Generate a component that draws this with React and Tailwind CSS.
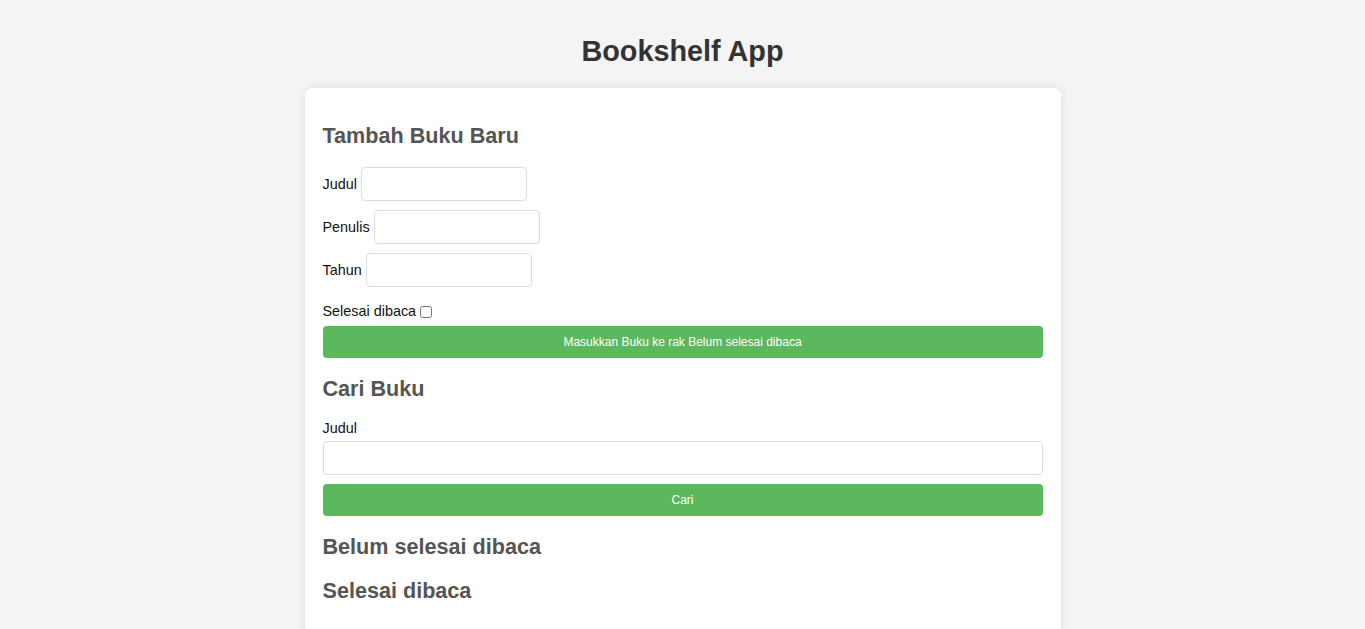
import React from 'react';

const labelCls = 'text-[14.4px] leading-[17px] text-[#111]';
const inputCls = 'w-[166px] h-[34px] border border-[#ddd] rounded-[4px] bg-white px-2 text-[14.4px] outline-none';
const btnCls = 'w-full h-[32px] rounded-[4px] bg-[#5cb85c] text-white text-[12px] leading-[32px] text-center';
const h2Cls = 'text-[21.6px] leading-[25px] font-bold text-[#555]';

const App = () => {
    return (
        <div className="min-h-screen bg-[#f4f4f4] font-['Liberation_Sans',Arial,sans-serif] overflow-hidden">
            <h1 className="pt-[35px] text-center text-[28.8px] leading-[33px] font-bold text-[#333]">Bookshelf App</h1>

            <div className="w-[756px] mx-auto mt-[20px] bg-white rounded-lg shadow-[0_0_10px_rgba(0,0,0,0.1)] px-[18px] pt-[35px] pb-[18px]">
                {/* Form tambah buku */}
                <section>
                    <h2 className={h2Cls}>Tambah Buku Baru</h2>
                    <div className="mt-[19px] flex flex-col gap-[9px]">
                        <div className="flex items-center gap-[4px]">
                            <label className={labelCls}>Judul</label>
                            <input type="text" className={inputCls} />
                        </div>
                        <div className="flex items-center gap-[4px]">
                            <label className={labelCls}>Penulis</label>
                            <input type="text" className={inputCls} />
                        </div>
                        <div className="flex items-center gap-[4px]">
                            <label className={labelCls}>Tahun</label>
                            <input type="number" className={inputCls} />
                        </div>
                    </div>
                    <div className="mt-[16px] h-[17px] flex items-center gap-[4px]">
                        <label className={labelCls}>Selesai dibaca</label>
                        <input type="checkbox" className="w-[12px] h-[12px] m-0" />
                    </div>
                    <button className={`${btnCls} mt-[6px]`}>Masukkan Buku ke rak Belum selesai dibaca</button>
                </section>

                {/* Cari buku */}
                <section className="mt-[18px]">
                    <h2 className={h2Cls}>Cari Buku</h2>
                    <label className={`${labelCls} block mt-[19px]`}>Judul</label>
                    <input type="text" className="mt-[4px] block w-full h-[34px] border border-[#ddd] rounded-[4px] bg-white px-2 text-[14.4px] outline-none" />
                    <button className={`${btnCls} mt-[9px]`}>Cari</button>
                </section>

                <section className="mt-[18px]">
                    <h2 className={h2Cls}>Belum selesai dibaca</h2>
                </section>

                <section className="mt-[19px] pb-[40px]">
                    <h2 className={h2Cls}>Selesai dibaca</h2>
                </section>
            </div>
        </div>
    );
};

export default App;
